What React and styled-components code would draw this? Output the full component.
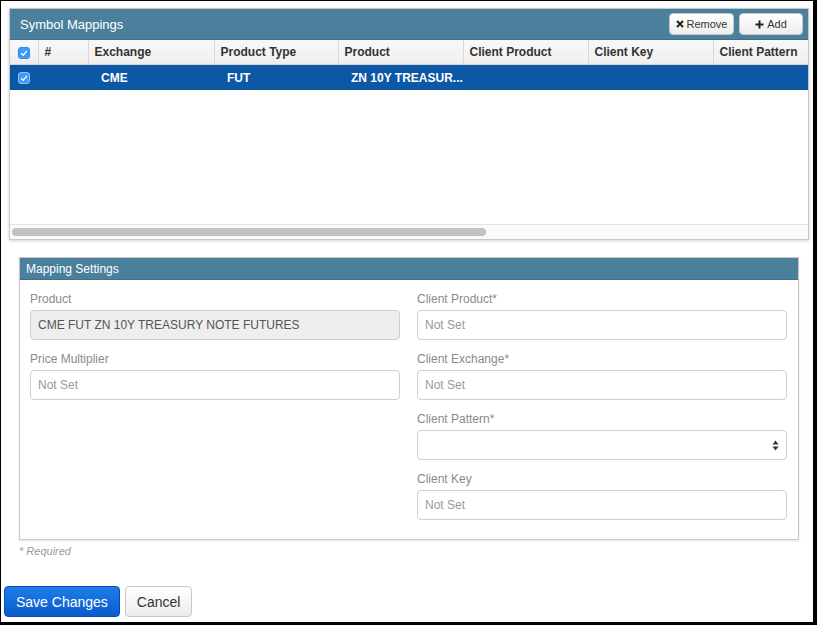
import React from 'react';
import styled, { createGlobalStyle } from 'styled-components';

const GlobalStyle = createGlobalStyle`
  html, body {
    margin: 0;
    padding: 0;
    background: #000;
  }
  body {
    font-family: "Liberation Sans", Arial, sans-serif;
  }
`;

const Screen = styled.div`
  width: 812px;
  height: 621px;
  margin: 1px 0 0 1px;
  background: #fff;
  display: flex;
  flex-direction: column;
  overflow: hidden;
`;

const GridPanel = styled.section`
  margin: 7px 0 0 8px;
  width: 798px;
  border: 1px solid #c8c8c8;
  box-shadow: 0 1px 3px rgba(0, 0, 0, 0.18);
  display: flex;
  flex-direction: column;
`;

const PanelHeader = styled.div`
  height: ${(p) => p.h}px;
  background: #4b809c;
  color: #fff;
  font-size: ${(p) => p.fs}px;
  padding: 0 ${(p) => p.pad}px 0 ${(p) => p.padLeft}px;
  display: flex;
  align-items: center;
  justify-content: space-between;
  border-bottom: 1px solid #3f7089;
`;

const HeaderTools = styled.div`
  display: flex;
  gap: 5px;
`;

const ToolButton = styled.button`
  height: 22px;
  width: ${(p) => p.w}px;
  border: 1px solid #c6c6c6;
  border-radius: 4px;
  background: linear-gradient(#ffffff, #ededed);
  font-family: inherit;
  font-size: 11px;
  color: #333;
  display: flex;
  align-items: center;
  justify-content: center;
  gap: 3px;
  padding: 0;
`;

const TableViewport = styled.div`
  height: 184px;
  overflow: hidden;
  border-bottom: 1px solid #e2e2e2;
`;

const Table = styled.table`
  border-collapse: collapse;
  table-layout: fixed;
  width: 828px;
  font-size: 12px;
`;

const HeadCell = styled.th`
  height: 24px;
  background: linear-gradient(#f8f8f8, #eeeeee);
  border-right: 1px solid #d9d9d9;
  border-bottom: 1px solid #d6d6d6;
  font-weight: bold;
  color: #333;
  padding: 0 0 0 ${(p) => (p.center ? 0 : 6)}px;
  text-align: ${(p) => (p.center ? 'center' : 'left')};
  white-space: nowrap;
  overflow: hidden;
`;

const SelectedRow = styled.tr`
  background: #0c58a5;
  color: #fff;
`;

const Cell = styled.td`
  height: 25px;
  padding: 0 0 0 ${(p) => (p.center ? 0 : 13)}px;
  text-align: ${(p) => (p.center ? 'center' : 'left')};
  font-weight: bold;
  white-space: nowrap;
  overflow: hidden;
`;

const CheckBox = styled.span`
  display: inline-flex;
  width: 12px;
  height: 12px;
  border-radius: 3px;
  background: #3d9bf8;
  border: 1px solid ${(p) => (p.onDark ? '#8fc3f5' : '#2f86e0')};
  align-items: center;
  justify-content: center;
  vertical-align: middle;
  box-sizing: border-box;
`;

const ScrollTrack = styled.div`
  height: 14px;
  background: #fafafa;
  display: flex;
  align-items: center;
  padding-left: 2px;
`;

const ScrollThumb = styled.div`
  width: 474px;
  height: 8px;
  border-radius: 4px;
  background: #c2c2c2;
`;

const SettingsPanel = styled.section`
  margin: 17px 0 0 18px;
  width: 778px;
  border: 1px solid #c8c8c8;
  box-shadow: 0 1px 2px rgba(0, 0, 0, 0.12);
`;

const SettingsBody = styled.div`
  display: grid;
  grid-template-columns: 370px 370px;
  column-gap: 17px;
  padding: 12px 10px 19px 10px;
`;

const Column = styled.div`
  display: flex;
  flex-direction: column;
  gap: 12px;
`;

const Field = styled.div`
  display: flex;
  flex-direction: column;
`;

const Label = styled.label`
  font-size: 12px;
  color: #8a8a8a;
  height: 18px;
  line-height: 14px;
`;

const Input = styled.div`
  height: 30px;
  box-sizing: border-box;
  border: 1px solid #cfcfcf;
  border-radius: 4px;
  background: ${(p) => (p.disabled ? '#eeeeee' : '#fff')};
  color: ${(p) => (p.disabled ? '#555' : '#999')};
  font-size: 12px;
  padding: 0 7px;
  display: flex;
  align-items: center;
  justify-content: space-between;
`;

const Required = styled.div`
  margin: 5px 0 0 18px;
  font-size: 11px;
  font-style: italic;
  color: #9a9a9a;
`;

const Actions = styled.div`
  margin: 29px 0 0 3px;
  display: flex;
  gap: 5px;
`;

const ActionButton = styled.button`
  height: 31px;
  padding: 0 ${(p) => p.pad}px;
  border-radius: 4px;
  font-family: inherit;
  font-size: 14px;
  border: 1px solid ${(p) => (p.primary ? '#0a4fb0' : '#c9c9c9')};
  color: ${(p) => (p.primary ? '#fff' : '#333')};
  background: ${(p) =>
    p.primary ? 'linear-gradient(#1d7de8, #0a5ccc)' : 'linear-gradient(#ffffff, #ececec)'};
`;

const Check = () => (
  <svg width="8" height="8" viewBox="0 0 8 8">
    <path d="M1.2 4.2 L3.2 6.2 L6.9 1.8" fill="none" stroke="#fff" strokeWidth="1.3" />
  </svg>
);

const columns = [
  { w: 28, label: '', cb: true },
  { w: 50, label: '#' },
  { w: 126, label: 'Exchange' },
  { w: 124, label: 'Product Type' },
  { w: 125, label: 'Product' },
  { w: 125, label: 'Client Product' },
  { w: 125, label: 'Client Key' },
  { w: 125, label: 'Client Pattern' },
];

const rowData = ['', 'CME', 'FUT', 'ZN 10Y TREASUR...', '', '', ''];

const Arrows = () => (
  <svg width="7" height="11" viewBox="0 0 7 11">
    <path d="M3.5 0.5 L6.5 4.5 H0.5 Z" fill="#333" />
    <path d="M3.5 10.5 L6.5 6.5 H0.5 Z" fill="#333" />
  </svg>
);

export default function App() {
  return (
    <Screen>
      <GlobalStyle />
      <GridPanel>
        <PanelHeader h={30} fs={13} pad={5} padLeft={10}>
          <span>Symbol Mappings</span>
          <HeaderTools>
            <ToolButton w={65}>
              <svg width="8" height="8" viewBox="0 0 8 8">
                <path d="M1 1 L7 7 M7 1 L1 7" stroke="#222" strokeWidth="2" />
              </svg>
              Remove
            </ToolButton>
            <ToolButton w={64}>
              <svg width="9" height="9" viewBox="0 0 9 9">
                <path d="M4.5 0.5 V8.5 M0.5 4.5 H8.5" stroke="#222" strokeWidth="2" />
              </svg>
              Add
            </ToolButton>
          </HeaderTools>
        </PanelHeader>
        <TableViewport>
          <Table>
            <colgroup>
              {columns.map((c, i) => (
                <col key={i} style={{ width: c.w }} />
              ))}
            </colgroup>
            <thead>
              <tr>
                {columns.map((c, i) => (
                  <HeadCell key={i} center={c.cb}>
                    {c.cb ? (
                      <CheckBox>
                        <Check />
                      </CheckBox>
                    ) : (
                      c.label
                    )}
                  </HeadCell>
                ))}
              </tr>
            </thead>
            <tbody>
              <SelectedRow>
                <Cell center>
                  <CheckBox onDark>
                    <Check />
                  </CheckBox>
                </Cell>
                {rowData.map((v, i) => (
                  <Cell key={i}>{v}</Cell>
                ))}
              </SelectedRow>
            </tbody>
          </Table>
        </TableViewport>
        <ScrollTrack>
          <ScrollThumb />
        </ScrollTrack>
      </GridPanel>

      <SettingsPanel>
        <PanelHeader h={21} fs={12} pad={6} padLeft={6}>
          <span>Mapping Settings</span>
        </PanelHeader>
        <SettingsBody>
          <Column>
            <Field>
              <Label>Product</Label>
              <Input disabled>CME FUT ZN 10Y TREASURY NOTE FUTURES</Input>
            </Field>
            <Field>
              <Label>Price Multiplier</Label>
              <Input>Not Set</Input>
            </Field>
          </Column>
          <Column>
            <Field>
              <Label>Client Product*</Label>
              <Input>Not Set</Input>
            </Field>
            <Field>
              <Label>Client Exchange*</Label>
              <Input>Not Set</Input>
            </Field>
            <Field>
              <Label>Client Pattern*</Label>
              <Input>
                <span />
                <Arrows />
              </Input>
            </Field>
            <Field>
              <Label>Client Key</Label>
              <Input>Not Set</Input>
            </Field>
          </Column>
        </SettingsBody>
      </SettingsPanel>

      <Required>* Required</Required>

      <Actions>
        <ActionButton primary pad={11}>Save Changes</ActionButton>
        <ActionButton pad={11}>Cancel</ActionButton>
      </Actions>
    </Screen>
  );
}
